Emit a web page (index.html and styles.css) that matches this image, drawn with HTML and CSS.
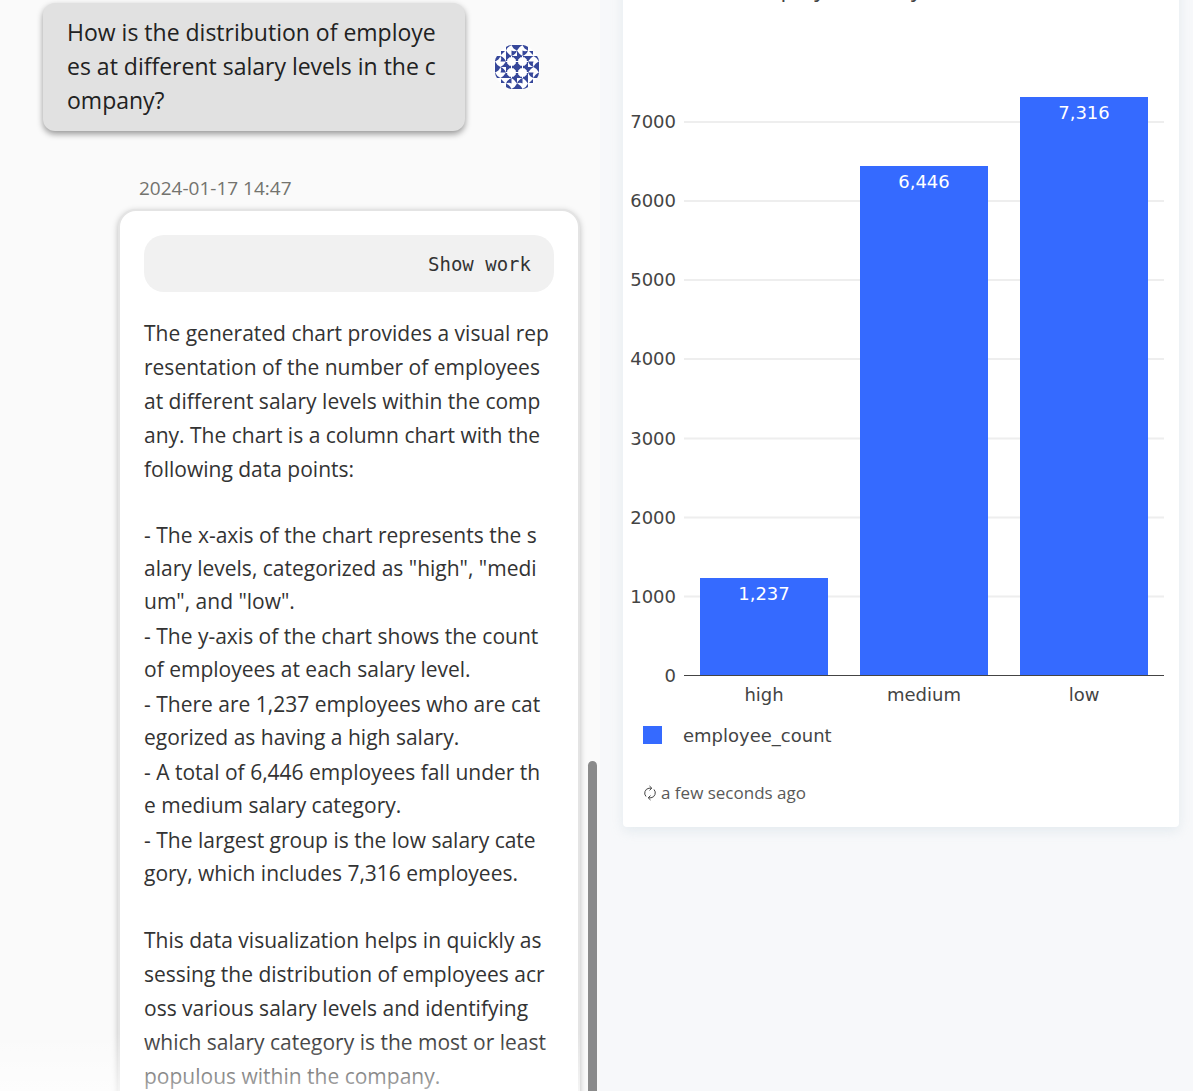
FILE: index.html
```html
<!DOCTYPE html>
<html lang="en">
<head>
<meta charset="utf-8">
<title>Salary level distribution</title>
<link rel="stylesheet" href="styles.css">
</head>
<body>
<div class="layout">
  <main class="chat">
    <section class="question">
      <p class="question-bubble">How is the distribution of employe<br>es at different salary levels in the c<br>ompany?</p>
      <svg class="avatar" viewBox="0 0 46 46" role="img" aria-label="User avatar">
        <defs>
          <clipPath id="round"><circle cx="23" cy="23" r="23"/></clipPath>
          <path id="star" d="M0 0h11v11H0zM3.500 1.200L1.200 3.500v4l2.300 2.300h4l2.300-2.300v-4L7.500 1.200z" fill-rule="evenodd"/>
          <path id="fan" d="M0 0h5.500Q1.500 2 0 5.500zM5.500 0H11v5.500Q7 4 5.500 0zM0 5.500Q2 9 5.500 11H0zM5.500 5.500Q8 7 11 5.500Q10 9 5.500 11z"/>
        </defs>
        <g clip-path="url(#round)">
          <path class="avatar-bg" d="M0 0h46v46H0z"/>
          <g class="avatar-ink">
            <use href="#star" x="12" y="12"/><use href="#star" x="23" y="12"/>
            <use href="#star" x="12" y="23"/><use href="#star" x="23" y="23"/>
            <use href="#fan" x="12" y="1"/>
            <use href="#fan" x="23" y="1"/>
            <use href="#fan" transform="translate(1 23) rotate(-90)"/>
            <use href="#fan" transform="translate(1 34) rotate(-90)"/>
            <use href="#fan" transform="translate(45 12) rotate(90)"/>
            <use href="#fan" transform="translate(45 23) rotate(90)"/>
            <use href="#fan" transform="translate(23 45) rotate(180)"/>
            <use href="#fan" transform="translate(34 45) rotate(180)"/>
            <path d="M7 7h4L7 11zM39 7v4l-4-4zM7 39v-4l4 4zM39 39h-4l4-4z"/>
          </g>
          <path class="avatar-gap" d="M17.500 12v22M28.500 12v22M12 17.500h22M12 28.500h22"/>
        </g>
      </svg>
    </section>

    <time class="stamp" datetime="2024-01-17T14:47">2024-01-17 14:47</time>

    <article class="answer">
      <button class="show-work" type="button">Show work</button>
      <p>The generated chart provides a visual rep<br>resentation of the number of employees<br>at different salary levels within the comp<br>any. The chart is a column chart with the<br>following data points:</p>
      <ul class="points">
        <li>- The x-axis of the chart represents the s<br>alary levels, categorized as "high", "medi<br>um", and "low".</li>
        <li>- The y-axis of the chart shows the count<br>of employees at each salary level.</li>
        <li>- There are 1,237 employees who are cat<br>egorized as having a high salary.</li>
        <li>- A total of 6,446 employees fall under th<br>e medium salary category.</li>
        <li>- The largest group is the low salary cate<br>gory, which includes 7,316 employees.</li>
      </ul>
      <p>This data visualization helps in quickly as<br>sessing the distribution of employees acr<br>oss various salary levels and identifying<br>which salary category is the most or least<br>populous within the company.</p>
    </article>
    <div class="fade"></div>
    <div class="scroll-thumb"></div>
  </main>

  <aside class="board">
    <section class="card">
      <h2 class="card-title">Employee Salary Distribution</h2>
      <svg class="chart" viewBox="0 0 556 760" role="img" aria-label="Employee count by salary level">
        <g class="grid">
          <path d="M61 122h480M61 201h480M61 280h480M61 359h480M61 438.500h480M61 517.500h480M61 596.500h480"/>
        </g>
        <g class="bars">
          <rect x="77" y="578" width="128" height="98"/>
          <rect x="237" y="166" width="128" height="510"/>
          <rect x="397" y="97" width="128" height="579"/>
        </g>
        <path class="axis" d="M61 675.500h480"/>
        <g class="ticks">
          <text x="53" y="128">7000</text>
          <text x="53" y="207">6000</text>
          <text x="53" y="286">5000</text>
          <text x="53" y="365">4000</text>
          <text x="53" y="445">3000</text>
          <text x="53" y="524">2000</text>
          <text x="53" y="603">1000</text>
          <text x="53" y="682">0</text>
        </g>
        <g class="names">
          <text x="141" y="701">high</text>
          <text x="301" y="701">medium</text>
          <text x="461" y="701">low</text>
        </g>
        <g class="values">
          <text x="141" y="600">1,237</text>
          <text x="301" y="188">6,446</text>
          <text x="461" y="119">7,316</text>
        </g>
        <rect class="key" x="20" y="726" width="19" height="18"/>
        <text class="key-label" x="60" y="742">employee_count</text>
      </svg>
      <footer class="updated">
        <svg class="refresh" viewBox="0 0 14 16" aria-hidden="true"><path d="M3 11.500A5 5 0 0 1 6 3.200h2.500M6.500 1l2.300 2.200-2.300 2.200M11 4.500a5 5 0 0 1-3 8.300H5.500M7.500 10.600l-2.300 2.200L7.500 15"/></svg>
        <span>a few seconds ago</span>
      </footer>
    </section>
  </aside>
</div>
</body>
</html>
```

FILE: styles.css
```css
* { box-sizing: border-box; }

body {
  margin: 0;
  font-family: "Open Sans", "Noto Sans", sans-serif;
  color: #333;
  background: #f7f8fa;
}

.layout {
  display: grid;
  grid-template-columns: 600fr 593fr;
  height: 100vh;
  overflow: hidden;
}

.chat {
  position: relative;
  overflow: hidden;
  padding: 3px 20px 0 43px;
  background: #fafafa;
}

.question {
  display: flex;
  align-items: center;
  gap: 29px;
}

.question-bubble {
  margin: 0;
  width: 422px;
  padding: 12px 24px 14px;
  border-radius: 12px;
  background: #e1e1e1;
  box-shadow: 0 3px 6px rgba(0, 0, 0, 0.4);
  color: #222;
  font-size: 23px;
  line-height: 34px;
  white-space: nowrap;
}

.avatar { width: 46px; height: 46px; }
.avatar-bg { fill: #fff; }
.avatar-ink { fill: #36479a; }
.avatar-gap { fill: none; stroke: #fff; stroke-width: 1; }

.stamp {
  display: block;
  margin: 43px 0 7px 96px;
  color: #73736e;
  font-size: 19px;
  line-height: 28px;
}

.answer {
  margin-left: 75px;
  padding: 24px;
  border: 2px solid #e4e4e4;
  border-radius: 18px;
  background: #fff;
  box-shadow: 0 2px 6px rgba(0, 0, 0, 0.25);
  font-size: 21px;
  line-height: 34px;
  white-space: nowrap;
}

.answer p { margin: 0; }

.show-work {
  display: block;
  width: 100%;
  height: 57px;
  margin-bottom: 24px;
  padding: 0 23px;
  border: 0;
  border-radius: 20px;
  background: #f1f1f1;
  color: #333;
  font-family: "DejaVu Sans Mono", monospace;
  font-size: 19px;
  text-align: right;
}

.points {
  display: flex;
  flex-direction: column;
  gap: 2px;
  margin: 33px 0;
  padding: 0;
  list-style: none;
  line-height: 33px;
}

.fade {
  position: absolute;
  right: 20px;
  bottom: 0;
  left: 0;
  height: 58px;
  background: linear-gradient(rgba(255, 255, 255, 0), rgba(255, 255, 255, 0.6));
}

.scroll-thumb {
  position: absolute;
  top: 761px;
  right: 3px;
  bottom: -8px;
  width: 9px;
  border-radius: 5px;
  background: #8b8b8b;
}

.board { padding: 0 14px 0 23px; }

/* The board is scrolled so that the card's title is nearly out of view. */
.card {
  margin-top: -46px;
  padding: 20px 0 21px;
  border-radius: 4px;
  background: #fff;
  box-shadow: 0 4px 12px rgba(200, 215, 222, 0.4);
}

.card-title {
  margin: 0;
  color: #444;
  font-size: 23px;
  font-weight: 400;
  line-height: 26px;
  text-align: center;
}

.chart {
  display: block;
  width: 100%;
  font-family: "DejaVu Sans", sans-serif;
  font-size: 18px;
  fill: #444;
}

.grid { stroke: #eee; stroke-width: 2; }
.bars, .key { fill: #356aff; }
.axis { stroke: #444; }
.ticks { text-anchor: end; }
.names, .values { text-anchor: middle; }
.values { fill: #fff; }

.updated {
  display: flex;
  align-items: center;
  gap: 4px;
  margin-top: 20px;
  padding: 0 20px;
  color: #595959;
  font-size: 17px;
  line-height: 26px;
}

.refresh {
  width: 14px;
  height: 16px;
  fill: none;
  stroke: #444;
}
```
